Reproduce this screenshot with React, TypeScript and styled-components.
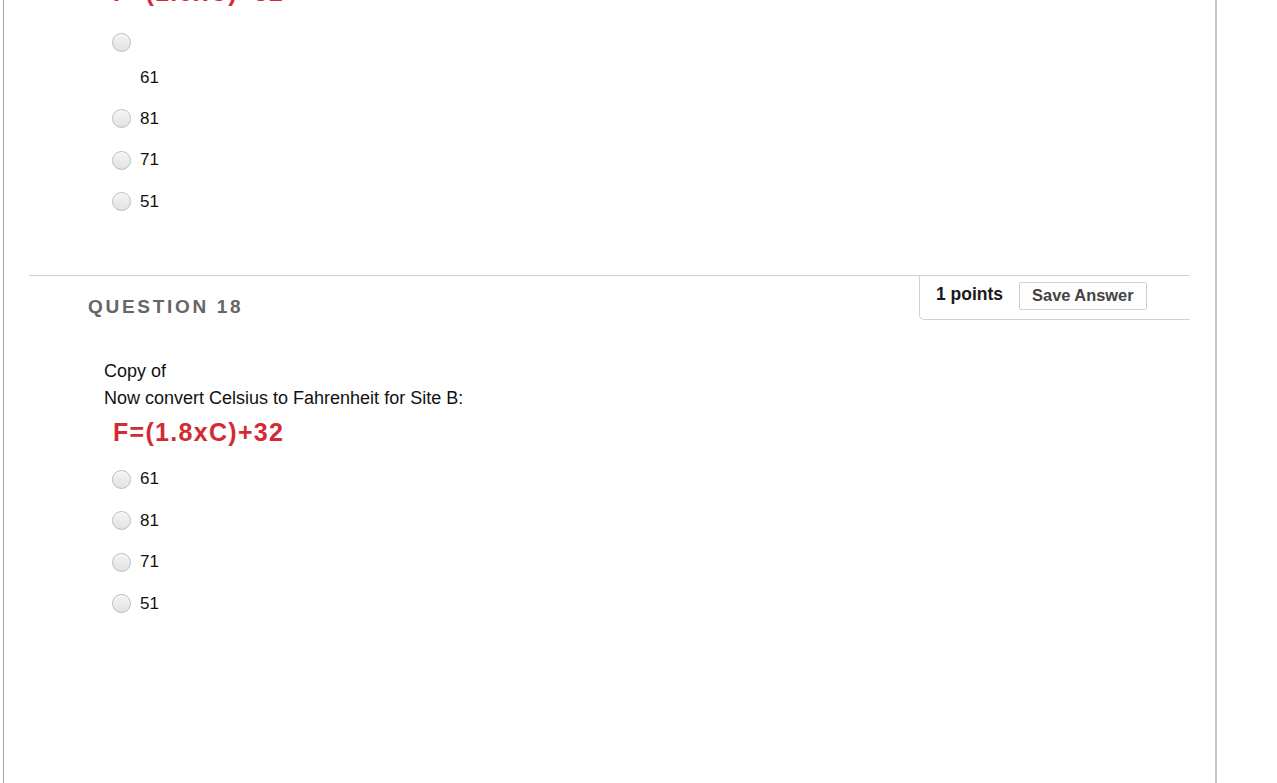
import styled, { createGlobalStyle } from "styled-components";

const GlobalStyle = createGlobalStyle`
  html, body {
    margin: 0;
    padding: 0;
    background: #fff;
  }
  body {
    font-family: "Liberation Sans", Arial, Helvetica, sans-serif;
    color: #111;
  }
`;

type Question = {
  number?: number;
  points?: number;
  lines: string[];
  options: string[];
  wrapFirst?: boolean;
};

const previous: Question = {
  lines: [],
  options: ["61", "81", "71", "51"],
  wrapFirst: true,
};

const current: Question = {
  number: 18,
  points: 1,
  lines: ["Copy of", "Now convert Celsius to Fahrenheit for Site B:"],
  options: ["61", "81", "71", "51"],
};

function Options({ q, name, top }: { q: Question; name: string; top: number }) {
  return (
    <OptionList $top={top}>
      {q.options.map((opt, i) => {
        const stacked = !!q.wrapFirst && i === 0;
        return (
          <Option key={opt + i} $stacked={stacked}>
            <RadioLine>
              <Radio type="radio" name={name} />
              {!stacked && <OptionLabel>{opt}</OptionLabel>}
            </RadioLine>
            {stacked && <WrappedLabel>{opt}</WrappedLabel>}
          </Option>
        );
      })}
    </OptionList>
  );
}

export default function App() {
  return (
    <>
      <GlobalStyle />
      <Frame>
        <PrevQuestion>
          <Formula>F=(1.8xC)+32</Formula>
          <Options q={previous} name="q17" top={12} />
        </PrevQuestion>

        <QuestionHead>
          <Title>QUESTION {current.number}</Title>
          <PointsBox>
            <Points>{current.points} points</Points>
            <SaveButton type="button">Save Answer</SaveButton>
          </PointsBox>
        </QuestionHead>

        <QuestionText>
          {current.lines.map((l) => (
            <div key={l}>{l}</div>
          ))}
        </QuestionText>
        <Formula>F=(1.8xC)+32</Formula>
        <Options q={current} name="q18" top={10} />
      </Frame>
    </>
  );
}

const Frame = styled.div`
  display: flex;
  flex-direction: column;
  margin-left: 3px;
  width: 1214px;
  min-height: 100vh;
  box-sizing: border-box;
  border-left: 1px solid #a8a8a8;
  border-right: 2px solid #c6c6c6;
  overflow: hidden;
`;

const PrevQuestion = styled.div`
  display: flex;
  flex-direction: column;
  margin-top: -25px;
  padding-bottom: 52px;
`;

const Formula = styled.div`
  height: 34px;
  line-height: 34px;
  margin-left: 109px;
  font-size: 25px;
  font-weight: 700;
  letter-spacing: 1.3px;
  color: #d42a33;
`;

const OptionList = styled.div<{ $top: number }>`
  display: flex;
  flex-direction: column;
  margin-top: ${(p) => p.$top}px;
  margin-left: 108px;
`;

const Option = styled.div<{ $stacked: boolean }>`
  display: flex;
  flex-direction: column;
  height: ${(p) => (p.$stacked ? "77px" : "41.5px")};
`;

const RadioLine = styled.label`
  display: flex;
  align-items: center;
  height: 42px;
  gap: 9px;
`;

const Radio = styled.input`
  appearance: none;
  -webkit-appearance: none;
  margin: 0;
  width: 19px;
  height: 19px;
  border-radius: 50%;
  border: 1px solid #bcbcbc;
  background: linear-gradient(#f4f4f4, #e2e2e2);
  box-shadow: inset 0 1px 1px rgba(255, 255, 255, 0.8);
  box-sizing: border-box;
  flex: none;
`;

const OptionLabel = styled.span`
  font-size: 17px;
  line-height: 20px;
  color: #111;
`;

const WrappedLabel = styled.span`
  padding: 5px 0 10px 28px;
  font-size: 17px;
  line-height: 20px;
  color: #111;
`;

const QuestionHead = styled.div`
  display: flex;
  justify-content: space-between;
  align-items: flex-start;
  margin: 0 25px;
  border-top: 1px solid #d2d2d2;
`;

const Title = styled.h2`
  margin: 19px 0 0 59px;
  font-size: 19px;
  line-height: 24px;
  font-weight: 700;
  letter-spacing: 2.7px;
  color: #666;
`;

const PointsBox = styled.div`
  display: flex;
  align-items: flex-start;
  gap: 16px;
  width: 271px;
  height: 44px;
  box-sizing: border-box;
  padding: 6px 0 0 16px;
  border-left: 1px solid #d2d2d2;
  border-bottom: 1px solid #d2d2d2;
  border-bottom-left-radius: 5px;
`;

const Points = styled.span`
  font-size: 17.5px;
  line-height: 24px;
  font-weight: 700;
  color: #1a1a1a;
`;

const SaveButton = styled.button`
  height: 28px;
  padding: 0 12px;
  font-family: inherit;
  font-size: 16.4px;
  font-weight: 700;
  color: #444;
  background: #fff;
  border: 1px solid #cfcfcf;
  border-radius: 2px;
`;

const QuestionText = styled.div`
  margin: 38px 0 3px 100px;
  font-size: 18px;
  line-height: 27px;
  color: #111;
`;
